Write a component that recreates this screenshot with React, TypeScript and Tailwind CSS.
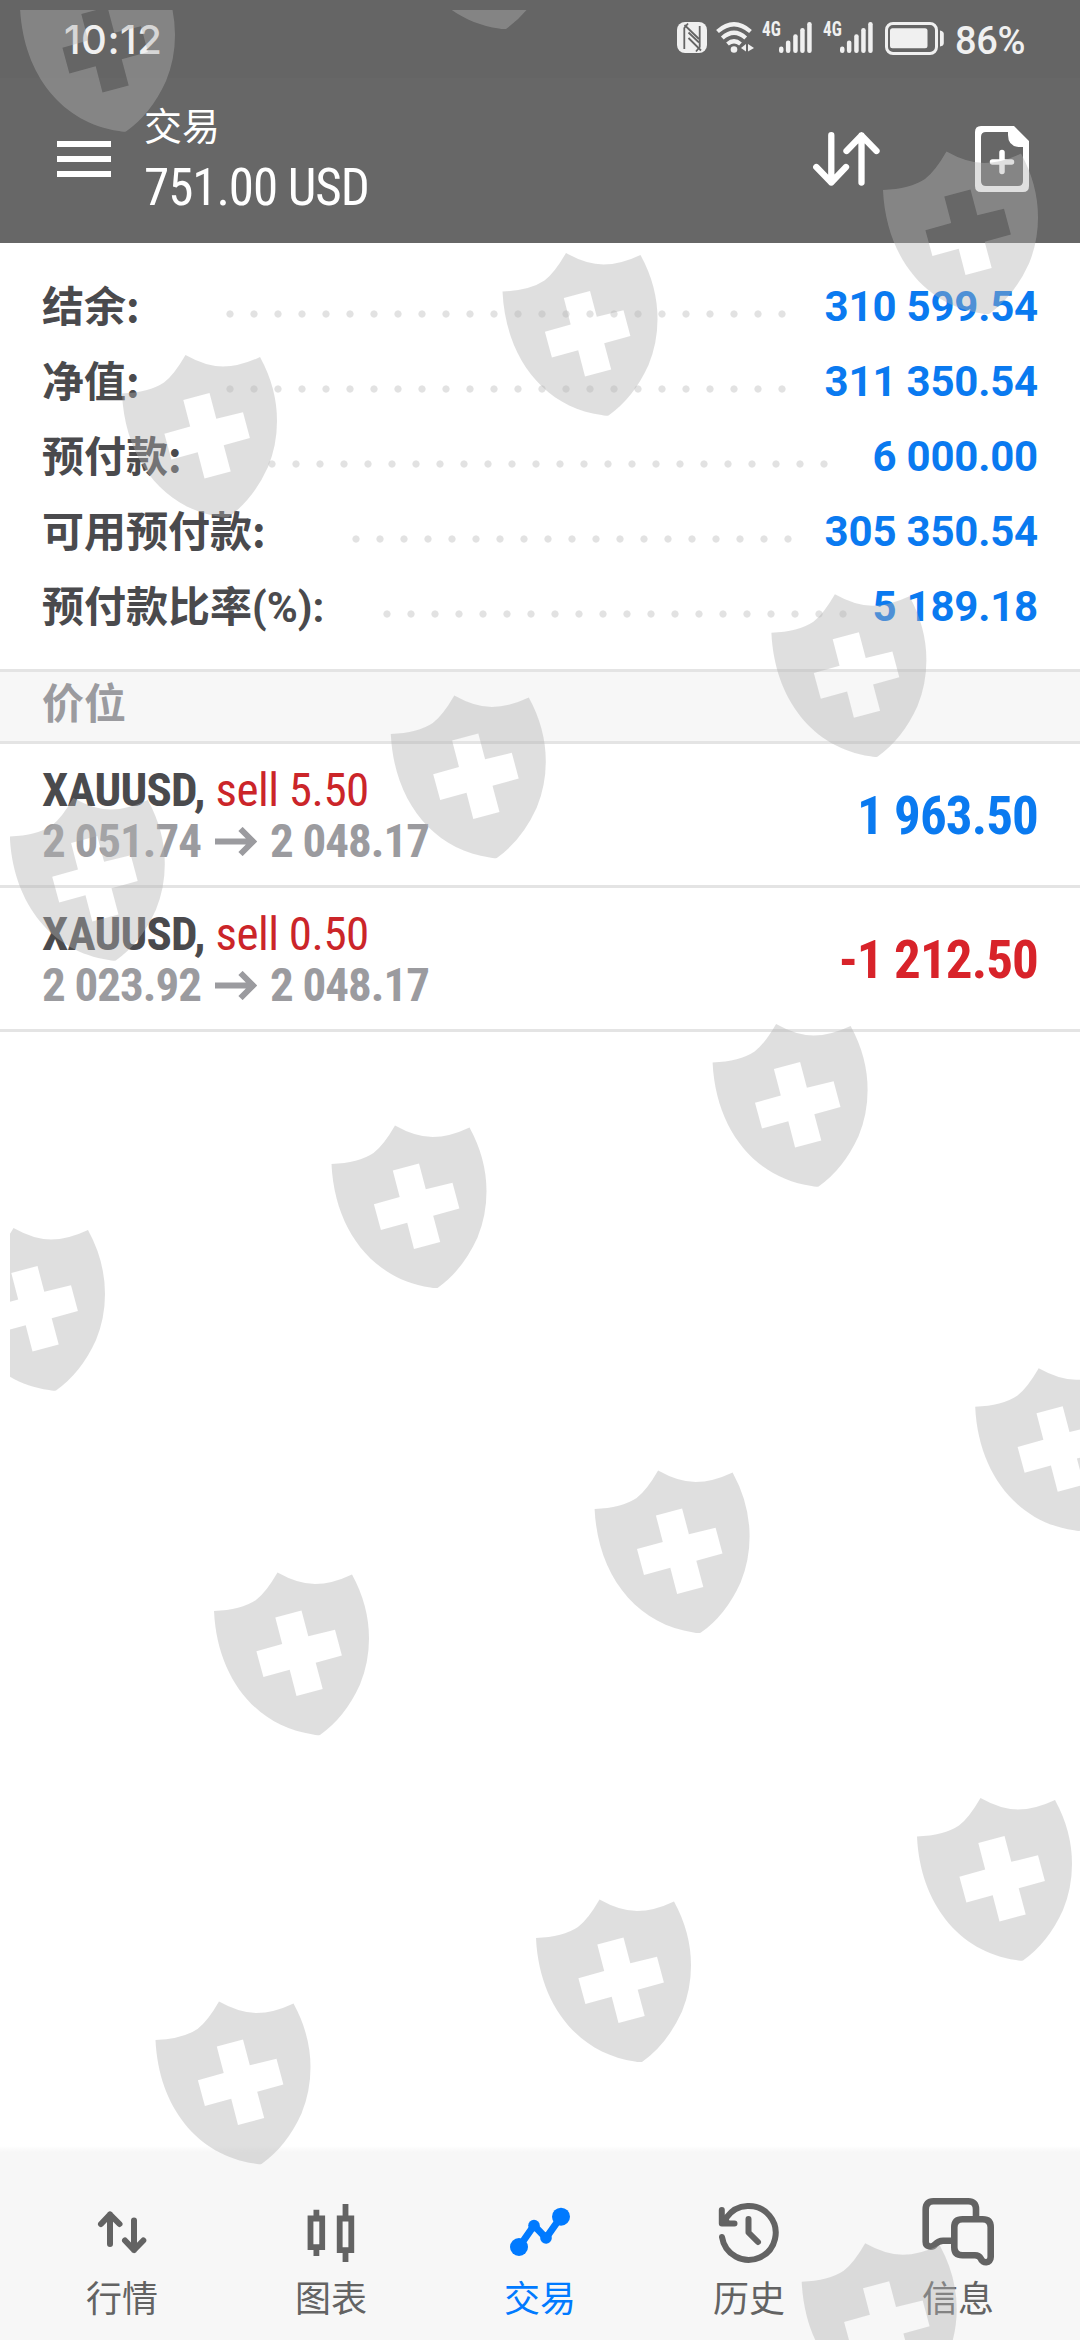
import type { ReactNode } from "react";
import clsx from "clsx";

const summary = [
  { label: "结余:", value: "310 599.54", labelWidth: "w-[176px]", dots: "w-[576px]" },
  { label: "净值:", value: "311 350.54", labelWidth: "w-[176px]", dots: "w-[576px]" },
  { label: "预付款:", value: "6 000.00", labelWidth: "w-[218px]", dots: "w-[576px]" },
  { label: "可用预付款:", value: "305 350.54", labelWidth: "w-[302px]", dots: "w-[456px]" },
  { label: "预付款比率", suffix: "(%):", value: "5 189.18", labelWidth: "w-[333px]", dots: "w-[480px]" },
];

const positions = [
  { symbol: "XAUUSD", side: "sell 5.50", open: "2 051.74", current: "2 048.17", profit: "1 963.50", loss: false },
  { symbol: "XAUUSD", side: "sell 0.50", open: "2 023.92", current: "2 048.17", profit: "-1 212.50", loss: true },
];

// top left corner of every shield on the page
const shields = [
  [20, -31],
  [400, -133.5],
  [883, 151.5],
  [502.5, 253],
  [122, 355],
  [771.4, 594.3],
  [390.8, 695.5],
  [9.8, 798],
  [712.6, 1024],
  [331.5, 1125.5],
  [-50, 1228],
  [975.2, 1368.3],
  [594.6, 1470.4],
  [214, 1572.5],
  [917, 1798],
  [536, 1899.5],
  [155.5, 2001.5],
  [801.7, 2243.3],
];

function Watermark() {
  return (
    <div className="pointer-events-none absolute top-[10px] right-0 bottom-0 left-[10px] overflow-hidden">
      <svg width="1070" height="2330" viewBox="10 10 1070 2330" fill="#b2b2b2" fillOpacity="0.41">
        {shields.map(([x, y]) => (
          <path
            key={`${x}-${y}`}
            transform={`translate(${x} ${y})`}
            fillRule="evenodd"
            d="M0 38.5Q27 37.500 42 27.500Q52 20 63.500 0Q84 11.500 101 11.500Q118 11.500 138 2Q155 33 155 66Q155 90 146 112Q131 145 106 162.400Q103 163 99 162C42 154 3 105 0 38.500ZM61.300 45L87.500 38L94.300 63.800L121 57.300L127.900 83L101.700 90.300L108.700 116.500L82.500 123.500L75.700 97.300L49.400 104.500L42.400 78.700L68.200 71.500Z"
          />
        ))}
      </svg>
    </div>
  );
}

function Signal() {
  return (
    <div className="flex h-[31px] w-[50px] items-start">
      <span className="w-[17px] origin-top-left scale-x-[0.86] font-['Roboto_Condensed'] text-[20px] leading-[14px] font-bold">
        4G
      </span>
      <svg width="33" height="31" fill="currentColor">
        <rect x="0" y="24.500" width="4.500" height="6.500" rx="2.200" />
        <rect x="6.900" y="18.500" width="4.500" height="12.500" rx="2.200" />
        <rect x="14.200" y="12.300" width="4.500" height="18.700" rx="2.200" />
        <rect x="21.200" y="6" width="4.500" height="25" rx="2.200" />
        <rect x="28.200" y="0" width="4.500" height="31" rx="2.200" />
      </svg>
    </div>
  );
}

function StatusBar() {
  return (
    <div className="flex h-[78px] items-start bg-[#656565] pl-[64px] text-[#f0f0f0]">
      <span className="mt-[15px] font-['Inter'] text-[40px] leading-[50px] font-medium tracking-[0.5px]">10:12</span>
      <div className="mt-[22px] mr-[57px] ml-auto flex items-start">
        {/* NFC */}
        <svg width="30" height="31" viewBox="0 0 30 31">
          <rect width="30" height="31" rx="8" fill="currentColor" />
          <path d="M7.300 27V6L11 1.500M22.700 4V25L19 29.500" fill="none" stroke="#656565" strokeWidth="1.800" />
          <path d="M7.500 3L22 17M11.500 10.500L22 20.500M11.500 16L24 28.500" fill="none" stroke="#656565" strokeWidth="1.800" />
        </svg>
        {/* Wi-Fi */}
        <svg className="ml-[9px]" width="38" height="31" viewBox="0 0 38 31" fill="none" stroke="currentColor" strokeWidth="4.200">
          <path d="M1.500 9.500Q18 -5 34.500 9.500M6.300 16Q18 5.500 29.700 16M11.500 22Q18 16.500 24.500 22" />
          <circle cx="18" cy="27.500" r="3.300" fill="currentColor" stroke="none" />
          <path d="M30 22V29.500L25 26ZM32 22V29.500L38 26Z" fill="currentColor" stroke="none" />
        </svg>
        <div className="ml-[8px]"><Signal /></div>
        <div className="ml-[11px]"><Signal /></div>
        {/* BATTERY */}
        <svg className="ml-[12px]" width="59" height="33" viewBox="0 0 59 33" fill="currentColor">
          <rect x="1.500" y="1.500" width="50" height="30" rx="6.500" fill="none" stroke="currentColor" strokeWidth="3" />
          <rect x="5" y="6.300" width="37.500" height="20" rx="2.500" />
          <path d="M55 8.500Q58.800 9 58.800 12V21Q58.800 24 55 24.500Z" />
        </svg>
        <span className="mt-[-4px] ml-[11px] w-[68px] font-['Roboto'] text-[38px] leading-[46px] font-medium tracking-[-0.4px]">
          86%
        </span>
      </div>
    </div>
  );
}

function Header() {
  return (
    <header className="h-[243px] bg-[#676767] text-white">
      <StatusBar />
      <div className="flex items-start pl-[57px]">
        <div className="mt-[63px] flex w-[54px] flex-col gap-[9px]">
          <div className="h-[6px] bg-white" />
          <div className="h-[6px] bg-white" />
          <div className="h-[6px] bg-white" />
        </div>
        <div className="mt-[22px] ml-[33px] flex flex-col gap-[10px]">
          <span className="font-['Noto_Sans_CJK_SC',sans-serif] text-[38px] leading-[48px]">交易</span>
          <span className="font-['Roboto_Condensed'] text-[51px] leading-[60px] tracking-[-1.05px]">751.00 USD</span>
        </div>
        <div className="mt-[48px] mr-[51px] ml-auto flex items-start gap-[95px]">
          <svg
            className="mt-[6px]"
            width="67"
            height="54"
            viewBox="0 0 67 54"
            fill="none"
            stroke="currentColor"
            strokeWidth="6.300"
            strokeLinecap="round"
            strokeLinejoin="round"
          >
            <path d="M18.300 3.200V50.500M3.300 35L18.300 50.500L33 35M48.500 50.500V3.500M33.500 19L48.500 3.500L63.500 19" />
          </svg>
          <svg width="54" height="66" viewBox="0 0 54 66">
            <path
              fill="currentColor"
              fillRule="evenodd"
              d="M6 0H39L54 15V60Q54 66 48 66H6Q0 66 0 60V6Q0 0 6 0ZM11 6Q6 6 6 11V55Q6 60 11 60H43Q48 60 48 55V21H43.500Q33 20 33 9V6Z"
            />
            <path d="M27 26.500V45.500M17.500 36H36.500" stroke="currentColor" strokeWidth="5.500" strokeLinecap="round" />
          </svg>
        </div>
      </div>
    </header>
  );
}

function NavItem({ label, active, children }: { label: string; active?: boolean; children: ReactNode }) {
  return (
    <div className={clsx("flex w-[209px] flex-col items-center", active ? "text-[#007aff]" : "text-[#636363]")}>
      <svg width="76" height="72" viewBox="0 0 76 72" fill="none" stroke="currentColor">
        {children}
      </svg>
      <span className="mt-[4px] font-['Noto_Sans_CJK_SC',sans-serif] text-[36px] leading-[48px]">{label}</span>
    </div>
  );
}

export default function App() {
  return (
    <div className="relative flex h-[2340px] w-[1080px] flex-col overflow-hidden bg-white">
      <Header />

      {/* ACCOUNT SUMMARY */}
      <section className="pt-[26px] pr-[42px] pb-[25px] pl-[42px]">
        {summary.map((row) => (
          <div key={row.label} className="flex h-[75px] items-start">
            <span
              className={clsx(
                "font-['Noto_Sans_CJK_SC',sans-serif] text-[42px] leading-[69px] font-bold whitespace-nowrap text-[#4a4a4d]",
                row.labelWidth
              )}
            >
              {row.label}
              {row.suffix && <span className="font-['Roboto']">{row.suffix}</span>}
            </span>
            <div
              className={clsx(
                "mt-[41px] h-[8px] bg-[radial-gradient(circle_at_center,#e2e2e2_3.2px,transparent_4px)] bg-[length:24px_8px]",
                row.dots
              )}
            />
            <span className="ml-auto font-['Roboto'] text-[42px] leading-[75px] font-bold tracking-[-0.2px] whitespace-nowrap text-[#0a7af0]">
              {row.value}
            </span>
          </div>
        ))}
      </section>

      <div className="h-[75px] border-y-[3px] border-[#e4e4e4] bg-[#f7f7f7] pl-[42px]">
        <span className="block font-['Noto_Sans_CJK_SC',sans-serif] text-[42px] leading-[57px] font-bold text-[#9b9b9f]">
          价位
        </span>
      </div>

      {/* OPEN POSITIONS */}
      <section className="font-['Roboto_Condensed']">
        {positions.map((p) => (
          <div key={p.side} className="flex h-[144px] justify-between border-b-[3px] border-[#e4e4e4] px-[42px]">
            <div className="pt-[21px]">
              <div className="text-[47px] leading-[50px] whitespace-nowrap">
                <span className="font-bold tracking-[-0.8px] text-[#4a4a4d]">{p.symbol},</span>{" "}
                <span className="tracking-[-0.5px] text-[#cb2529]">{p.side}</span>
              </div>
              <div className="flex items-start text-[47px] leading-[52px] font-bold tracking-[-1px] whitespace-nowrap text-[#9b9b9f]">
                <span>{p.open}</span>
                <svg className="mt-[12px] mr-[13px] ml-[14px]" width="42" height="29" fill="none" stroke="currentColor" strokeWidth="6">
                  <path d="M0 14.500H38M25.500 2L38 14.500L25.500 27" />
                </svg>
                <span>{p.current}</span>
              </div>
            </div>
            <span
              className={clsx(
                "text-[53px] leading-[144px] font-bold tracking-[-0.9px] whitespace-nowrap",
                p.loss ? "text-[#d8232a]" : "text-[#0a7af0]"
              )}
            >
              {p.profit}
            </span>
          </div>
        ))}
      </section>

      {/* TAB BAR */}
      <div className="mt-auto h-[6px] bg-gradient-to-b from-white to-[#f7f7f7]" />
      <nav className="flex h-[188px] justify-center bg-[#f7f7f7] pt-[44px]">
        <NavItem label="行情">
          <path
            d="M26 48V18.500M17 28L26 18.500L35.500 28M50 24.500V54M41 44.500L50 54L59.300 44.500"
            strokeWidth="6"
            strokeLinecap="round"
            strokeLinejoin="round"
          />
        </NavItem>
        <NavItem label="图表">
          <path
            d="M17.500 22.500H29.200V51.200H17.500ZM46.700 22.500H58.300V54.200H46.700ZM23.400 13.700V22M23.400 52V60M52.500 8V22M52.500 55V66"
            strokeWidth="5.800"
          />
        </NavItem>
        <NavItem label="交易" active>
          <path d="M17 51L32 29.500L44 42L59 20.700" strokeWidth="7" />
          <g fill="currentColor" stroke="none">
            <circle cx="17" cy="51" r="9" />
            <circle cx="32" cy="29.500" r="5.800" />
            <circle cx="44" cy="42" r="5.800" />
            <circle cx="59" cy="20.700" r="9" />
          </g>
        </NavItem>
        <NavItem label="历史">
          <g strokeWidth="6" strokeLinecap="round" strokeLinejoin="round">
            <path d="M11 41A27 27 0 1 0 15.500 21.500" />
            <path d="M10.800 14V27.500H23.500" />
            <path d="M10.800 27.500V22L16 19L18 27.500Z" fill="currentColor" strokeWidth="2" />
            <path d="M37.500 23V36.500L47 46" />
          </g>
        </NavItem>
        <NavItem label="信息">
          <g strokeWidth="6.600">
            <path d="M56 22V13Q56 5.300 48.300 5.300H13.400Q5.700 5.300 5.700 13.400V45.700C5.700 51 12 52 15 48.500Q18.500 44.700 23 44.700H32" />
            <path d="M42.500 23.300H62.700Q70.700 23.300 70.700 31.300V61C70.700 67.500 62.500 68 60.800 62.500Q59 59.300 55 59.300H42.500Q34.300 59.300 34.300 51.300V31.300Q34.300 23.300 42.500 23.300Z" />
          </g>
        </NavItem>
      </nav>

      <Watermark />
    </div>
  );
}
